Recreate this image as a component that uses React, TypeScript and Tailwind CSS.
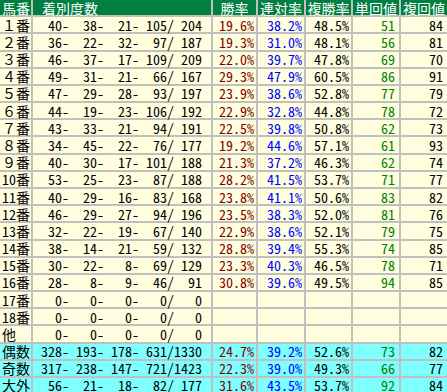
import React from 'react';

type Row = {
  label: string;
  counts: [number, number, number, number, number];
  win?: string;
  quin?: string;
  show?: string;
  tan?: number;
  fuku?: number;
  odd?: boolean;
};

const rows: Row[] = [
  { label: '１番', counts: [40, 38, 21, 105, 204], win: '19.6%', quin: '38.2%', show: '48.5%', tan: 51, fuku: 84 },
  { label: '２番', counts: [36, 22, 32, 97, 187], win: '19.3%', quin: '31.0%', show: '48.1%', tan: 56, fuku: 81 },
  { label: '３番', counts: [46, 37, 17, 109, 209], win: '22.0%', quin: '39.7%', show: '47.8%', tan: 69, fuku: 70 },
  { label: '４番', counts: [49, 31, 21, 66, 167], win: '29.3%', quin: '47.9%', show: '60.5%', tan: 86, fuku: 91 },
  { label: '５番', counts: [47, 29, 28, 93, 197], win: '23.9%', quin: '38.6%', show: '52.8%', tan: 77, fuku: 79 },
  { label: '６番', counts: [44, 19, 23, 106, 192], win: '22.9%', quin: '32.8%', show: '44.8%', tan: 78, fuku: 72 },
  { label: '７番', counts: [43, 33, 21, 94, 191], win: '22.5%', quin: '39.8%', show: '50.8%', tan: 62, fuku: 73 },
  { label: '８番', counts: [34, 45, 22, 76, 177], win: '19.2%', quin: '44.6%', show: '57.1%', tan: 61, fuku: 93 },
  { label: '９番', counts: [40, 30, 17, 101, 188], win: '21.3%', quin: '37.2%', show: '46.3%', tan: 62, fuku: 74 },
  { label: '10番', counts: [53, 25, 23, 87, 188], win: '28.2%', quin: '41.5%', show: '53.7%', tan: 71, fuku: 77 },
  { label: '11番', counts: [40, 29, 16, 83, 168], win: '23.8%', quin: '41.1%', show: '50.6%', tan: 83, fuku: 82 },
  { label: '12番', counts: [46, 29, 27, 94, 196], win: '23.5%', quin: '38.3%', show: '52.0%', tan: 81, fuku: 76 },
  { label: '13番', counts: [32, 22, 19, 67, 140], win: '22.9%', quin: '38.6%', show: '52.1%', tan: 79, fuku: 75 },
  { label: '14番', counts: [38, 14, 21, 59, 132], win: '28.8%', quin: '39.4%', show: '55.3%', tan: 74, fuku: 85 },
  { label: '15番', counts: [30, 22, 8, 69, 129], win: '23.3%', quin: '40.3%', show: '46.5%', tan: 78, fuku: 71 },
  { label: '16番', counts: [28, 8, 9, 46, 91], win: '30.8%', quin: '39.6%', show: '49.5%', tan: 94, fuku: 85 },
  { label: '17番', counts: [0, 0, 0, 0, 0] },
  { label: '18番', counts: [0, 0, 0, 0, 0] },
  { label: '他', counts: [0, 0, 0, 0, 0] },
  { label: '偶数', counts: [328, 193, 178, 631, 1330], win: '24.7%', quin: '39.2%', show: '52.6%', tan: 73, fuku: 82, odd: true },
  { label: '奇数', counts: [317, 238, 147, 721, 1423], win: '22.3%', quin: '39.0%', show: '49.3%', tan: 66, fuku: 77, odd: true },
  { label: '大外', counts: [56, 21, 18, 82, 177], win: '31.6%', quin: '43.5%', show: '53.7%', tan: 92, fuku: 84, odd: true },
];

const pad = (n: number) => String(n).padStart(4, ' ');

// 着別度数 is laid out like the fixed-width original: "  40-  38-  21- 105/ 204"
function countText(c: Row['counts']) {
  return `${pad(c[0])}-${pad(c[1])}-${pad(c[2])}-${pad(c[3])}/${pad(c[4])}`;
}

const headers = ['勝率', '連対率', '複勝率', '単回値', '複回値'];

export default function App() {
  return (
    <div className="h-[392px] w-[447px] overflow-hidden bg-[#c0c0c0] font-['Noto_Sans_Mono_CJK_JP','Noto_Sans_CJK_JP',monospace] text-[14px] leading-[14px]">
      <div className="grid h-[392px] grid-cols-[31px_178px_43px_46px_45px_46px_46px] grid-rows-[repeat(22,minmax(0,1fr))] gap-[2px]">
        <div className="flex items-center bg-[#008040] pl-[2px] text-white">馬番</div>
        <div className="flex items-center bg-[#008040] pl-[9px] text-white">着別度数</div>
        {headers.map((h) => (
          <div key={h} className="flex items-center justify-center bg-[#008040] text-white">
            {h}
          </div>
        ))}
        {rows.map((r) => {
          const bg = r.odd ? 'bg-[#80ffff]' : 'bg-[#ffffe0]';
          return (
            <React.Fragment key={r.label}>
              <div className={`flex items-center pl-[2px] text-black ${bg}`}>{r.label}</div>
              <div className={`flex items-center justify-end whitespace-pre pr-[9px] text-black ${bg}`}>{countText(r.counts)}</div>
              <div className={`flex items-center justify-end pr-[2px] text-[#800000] ${bg}`}>{r.win}</div>
              <div className={`flex items-center justify-end pr-[2px] text-[#0000ff] ${bg}`}>{r.quin}</div>
              <div className={`flex items-center justify-end pr-[2px] text-black ${bg}`}>{r.show}</div>
              <div className={`flex items-center justify-end pr-[4px] text-[#008000] ${bg}`}>{r.tan}</div>
              <div className={`flex items-center justify-end pr-[4px] text-black ${bg}`}>{r.fuku}</div>
            </React.Fragment>
          );
        })}
      </div>
    </div>
  );
}
